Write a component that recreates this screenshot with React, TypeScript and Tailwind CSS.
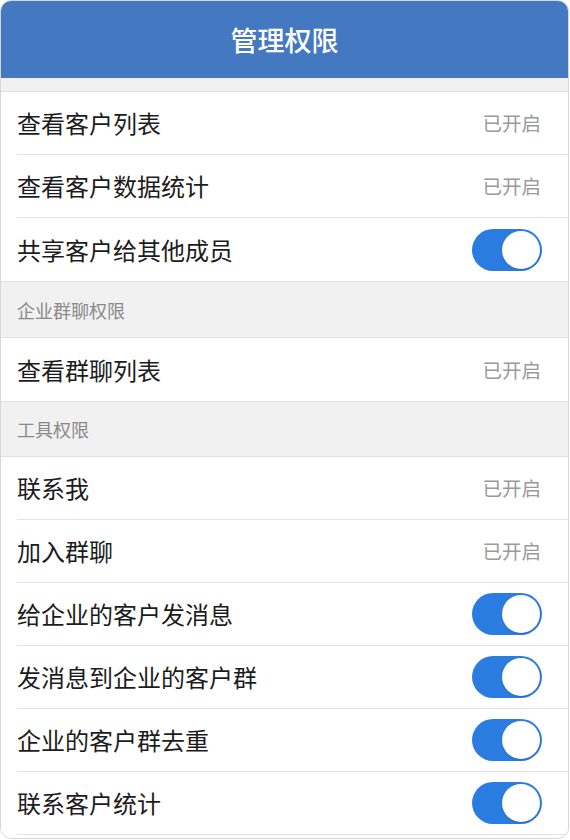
import React from "react";

type Item = { label: string; kind: "text" | "toggle" };

const Toggle = () => (
  <div className="w-[70px] h-[42px] rounded-full bg-[#2a7ce0] flex items-center justify-end pr-[2px]">
    <div className="w-[38px] h-[38px] rounded-full bg-white shadow-[0_1px_2px_rgba(0,0,0,0.15)]" />
  </div>
);

const Row = ({ item, divider }: { item: Item; divider: boolean }) => (
  <div className="bg-white pl-[16px]">
    <div
      className={
        "h-[63px] flex items-center justify-between pr-[26px] " +
        (divider ? "border-b border-[#e3e3e3]" : "")
      }
    >
      <span className="text-[24px] text-[#1c1c1c] leading-none">{item.label}</span>
      {item.kind === "text" ? (
        <span className="text-[19.5px] text-[#9a9a9a] leading-none pr-[1px]">已开启</span>
      ) : (
        <Toggle />
      )}
    </div>
  </div>
);

const Section = ({ title, h }: { title: string; h: string }) => (
  <div className={"bg-[#f1f1f1] border-y border-[#e0e0e0] flex items-center pl-[16px] " + h}>
    <span className="text-[18px] text-[#8a8a8a] leading-none">{title}</span>
  </div>
);

export default function App() {
  const g1: Item[] = [
    { label: "查看客户列表", kind: "text" },
    { label: "查看客户数据统计", kind: "text" },
    { label: "共享客户给其他成员", kind: "toggle" },
  ];
  const g2: Item[] = [{ label: "查看群聊列表", kind: "text" }];
  const g3: Item[] = [
    { label: "联系我", kind: "text" },
    { label: "加入群聊", kind: "text" },
    { label: "给企业的客户发消息", kind: "toggle" },
    { label: "发消息到企业的客户群", kind: "toggle" },
    { label: "企业的客户群去重", kind: "toggle" },
    { label: "联系客户统计", kind: "toggle" },
  ];
  return (
    <div
      className="w-[570px] h-[840px] bg-white"
      style={{ fontFamily: '"Noto Sans CJK SC", "Noto Sans", sans-serif' }}
    >
      <div className="w-[569px] h-[839px] rounded-[11px] border border-[#d6d6d6] overflow-hidden bg-white flex flex-col">
        <div className="h-[77px] bg-[#4478c0] flex items-center justify-center shrink-0">
          <span className="text-[27px] font-medium text-white leading-none">管理权限</span>
        </div>
        <div className="h-[14px] bg-[#f1f1f1] border-b border-[#e0e0e0] shrink-0" />
        {g1.map((it, i) => (
          <Row key={it.label} item={it} divider={i < g1.length - 1} />
        ))}
        <Section title="企业群聊权限" h="h-[57px]" />
        {g2.map((it, i) => (
          <Row key={it.label} item={it} divider={i < g2.length - 1} />
        ))}
        <Section title="工具权限" h="h-[56px]" />
        {g3.map((it) => (
          <Row key={it.label} item={it} divider={true} />
        ))}
      </div>
    </div>
  );
}
